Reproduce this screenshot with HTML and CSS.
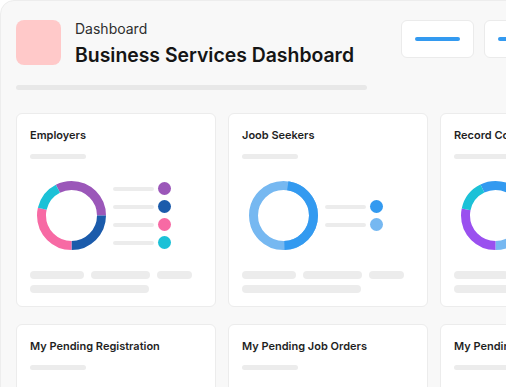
FILE: index.html
```html
<!DOCTYPE html>
<html lang="en">
  <head>
    <meta charset="UTF-8" />
    <meta name="viewport" content="width=device-width, initial-scale=1.0" />
    <title>Business Services Dashboard</title>
    <link rel="stylesheet" href="styles.css">
  </head>
  <body>
    <div class="page">
      <div class="header">
        <div class="logo"></div>
        <div class="heading">
          <div class="crumb">Dashboard</div>
          <h1>Business Services Dashboard</h1>
        </div>
        <div class="actions">
          <button class="action"><span class="action-line"></span></button>
          <button class="action"><span class="action-line"></span></button>
          <button class="action"><span class="action-line"></span></button>
        </div>
      </div>
      <div class="header-bar"></div>

      <div class="grid">
        <!-- Employers -->
        <div class="card">
          <h3>Employers</h3>
          <div class="sub-bar"></div>
          <div class="chart">
            <svg class="donut" viewBox="0 0 69 69">
              <g transform="rotate(-90 34.5 34.5)">
                <circle cx="34.5" cy="34.5" r="30" pathLength="100" stroke="#9b57b9" stroke-dasharray="32.5 67.5" stroke-dashoffset="-92.5" />
                <circle cx="34.5" cy="34.5" r="30" pathLength="100" stroke="#1b5bab" stroke-dasharray="25 75" stroke-dashoffset="-25" />
                <circle cx="34.5" cy="34.5" r="30" pathLength="100" stroke="#f76aa4" stroke-dasharray="28.6 71.4" stroke-dashoffset="-50" />
                <circle cx="34.5" cy="34.5" r="30" pathLength="100" stroke="#1cc1d7" stroke-dasharray="13.9 86.1" stroke-dashoffset="-78.6" />
              </g>
            </svg>
            <div class="legend">
              <div class="legend-row"><span class="legend-line"></span><span class="dot dot-purple"></span></div>
              <div class="legend-row"><span class="legend-line"></span><span class="dot dot-navy"></span></div>
              <div class="legend-row"><span class="legend-line"></span><span class="dot dot-pink"></span></div>
              <div class="legend-row"><span class="legend-line"></span><span class="dot dot-cyan"></span></div>
            </div>
          </div>
          <div class="footer">
            <div class="footer-row">
              <span class="pill w54"></span><span class="pill w59"></span><span class="pill w35"></span>
            </div>
            <div class="footer-row">
              <span class="pill w119"></span>
            </div>
          </div>
        </div>

        <!-- Job seekers -->
        <div class="card">
          <h3>Joob Seekers</h3>
          <div class="sub-bar"></div>
          <div class="chart">
            <svg class="donut" viewBox="0 0 69 69">
              <g transform="rotate(-90 34.5 34.5)">
                <circle cx="34.5" cy="34.5" r="30" pathLength="100" stroke="#76b8f1" />
                <circle cx="34.5" cy="34.5" r="30" pathLength="100" stroke="#339af0" stroke-dasharray="47.2 52.8" stroke-dashoffset="-2.3" />
              </g>
            </svg>
            <div class="legend">
              <div class="legend-row"><span class="legend-line"></span><span class="dot dot-blue"></span></div>
              <div class="legend-row"><span class="legend-line"></span><span class="dot dot-light"></span></div>
            </div>
          </div>
          <div class="footer">
            <div class="footer-row">
              <span class="pill w54"></span><span class="pill w59"></span><span class="pill w35"></span>
            </div>
            <div class="footer-row">
              <span class="pill w119"></span>
            </div>
          </div>
        </div>

        <!-- Record counts -->
        <div class="card">
          <h3>Record Counts</h3>
          <div class="sub-bar"></div>
          <div class="chart">
            <svg class="donut" viewBox="0 0 69 69">
              <g transform="rotate(-90 34.5 34.5)">
                <circle cx="34.5" cy="34.5" r="30" pathLength="100" stroke="#339af0" stroke-dasharray="35 65" stroke-dashoffset="-92.8" />
                <circle cx="34.5" cy="34.5" r="30" pathLength="100" stroke="#76b8f1" stroke-dasharray="22.2 77.8" stroke-dashoffset="-27.8" />
                <circle cx="34.5" cy="34.5" r="30" pathLength="100" stroke="#9a50ef" stroke-dasharray="28.3 71.7" stroke-dashoffset="-50" />
                <circle cx="34.5" cy="34.5" r="30" pathLength="100" stroke="#1cc1d7" stroke-dasharray="14.5 85.5" stroke-dashoffset="-78.3" />
              </g>
            </svg>
            <div class="legend">
              <div class="legend-row"><span class="legend-line"></span><span class="dot dot-blue"></span></div>
              <div class="legend-row"><span class="legend-line"></span><span class="dot dot-light"></span></div>
              <div class="legend-row"><span class="legend-line"></span><span class="dot dot-violet"></span></div>
              <div class="legend-row"><span class="legend-line"></span><span class="dot dot-cyan"></span></div>
            </div>
          </div>
          <div class="footer">
            <div class="footer-row">
              <span class="pill w54"></span><span class="pill w59"></span><span class="pill w35"></span>
            </div>
            <div class="footer-row">
              <span class="pill w119"></span>
            </div>
          </div>
        </div>

        <div class="card">
          <h3>My Pending Registration</h3>
          <div class="sub-bar"></div>
        </div>
        <div class="card">
          <h3>My Pending Job Orders</h3>
          <div class="sub-bar"></div>
        </div>
        <div class="card">
          <h3>My Pending Approvals</h3>
          <div class="sub-bar"></div>
        </div>
      </div>
    </div>
  </body>
</html>
```

FILE: styles.css
```css
* {
  box-sizing: border-box;
}

body {
  margin: 0;
  background-color: #fff;
  font-family: Inter, "Noto Sans", sans-serif;
  color: #1b1b1b;
  overflow: hidden;
}

.page {
  width: 656px;
  min-height: 420px;
  padding: 19px 15px;
  background-color: #f8f8f8;
  border: 1px solid #ededed;
  border-top-left-radius: 14px;
}

/* header */

.header {
  display: flex;
  align-items: flex-start;
}

.logo {
  width: 45px;
  height: 45px;
  border-radius: 8px;
  background-color: #ffc9c9;
}

.heading {
  margin-left: 14px;
}

.crumb {
  font-size: 14px;
  line-height: 17px;
  color: #2e2e2e;
}

.heading h1 {
  margin: 6px 0 0;
  font-size: 19.4px;
  line-height: 24px;
  font-weight: 600;
  color: #151515;
}

.actions {
  display: flex;
  gap: 10px;
  margin-left: auto;
}

.action {
  display: flex;
  align-items: center;
  justify-content: center;
  width: 73px;
  height: 38px;
  padding: 0;
  background-color: #fff;
  border: 1px solid #ebebeb;
  border-radius: 6px;
}

.action-line {
  width: 45px;
  height: 4px;
  border-radius: 2px;
  background-color: #339af0;
}

.header-bar {
  width: 351px;
  height: 5px;
  margin-top: 18px;
  border-radius: 3px;
  background-color: #e8e8e8;
}

/* cards */

.grid {
  display: grid;
  grid-template-columns: repeat(3, 200px);
  gap: 17px 12px;
  margin-top: 23px;
}

.card {
  min-height: 194px;
  padding: 14px 13px 13px;
  background-color: #fff;
  border: 1px solid #ececec;
  border-radius: 6px;
  overflow: hidden;
}

.card h3 {
  margin: 0;
  font-size: 11px;
  line-height: 15px;
  font-weight: 600;
  color: #1f1f1f;
  white-space: nowrap;
}

.sub-bar {
  width: 56px;
  height: 5px;
  margin-top: 11px;
  border-radius: 3px;
  background-color: #ececec;
}

.chart {
  display: flex;
  align-items: center;
  margin-top: 22px;
  padding-left: 7px;
}

.donut {
  flex: none;
  width: 69px;
  height: 69px;
}

.donut circle {
  fill: none;
  stroke-width: 9;
}

.legend {
  display: flex;
  flex-direction: column;
  gap: 5px;
  margin-left: 7px;
}

.legend-row {
  display: flex;
  align-items: center;
  gap: 4px;
}

.legend-line {
  width: 41px;
  height: 4px;
  border-radius: 2px;
  background-color: #ececec;
}

.dot {
  width: 13px;
  height: 13px;
  border-radius: 50%;
}

.dot-purple { background-color: #9b57b9; }
.dot-navy { background-color: #1b5bab; }
.dot-pink { background-color: #f76aa4; }
.dot-cyan { background-color: #1cc1d7; }
.dot-blue { background-color: #339af0; }
.dot-light { background-color: #76b8f1; }
.dot-violet { background-color: #9a50ef; }

.footer {
  display: flex;
  flex-direction: column;
  gap: 6px;
  margin-top: 21px;
}

.footer-row {
  display: flex;
  gap: 7px;
}

.pill {
  height: 8px;
  border-radius: 4px;
  background-color: #ececec;
}

.w54 { width: 54px; }
.w59 { width: 59px; }
.w35 { width: 35px; }
.w119 { width: 119px; }
```
